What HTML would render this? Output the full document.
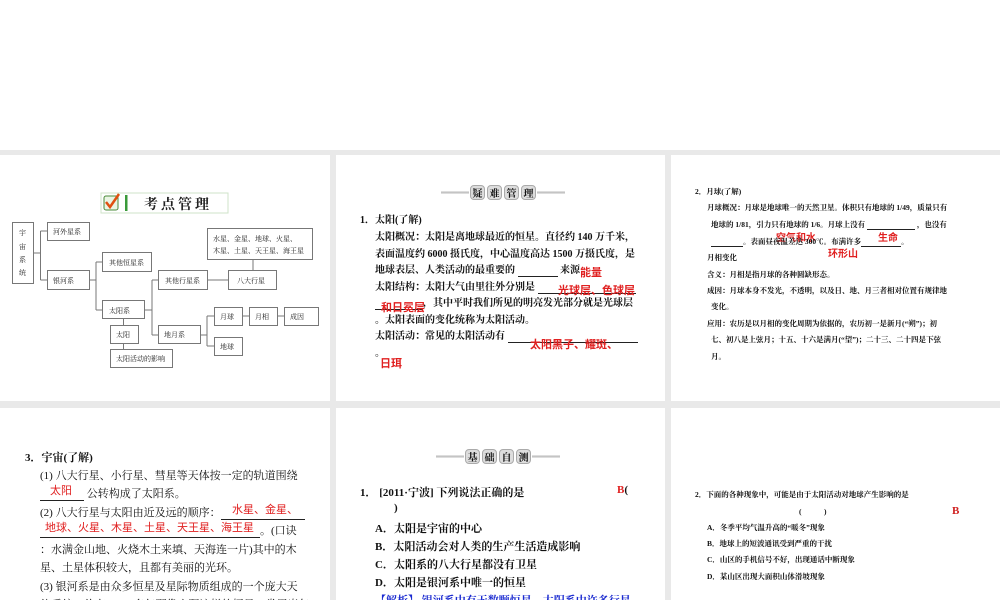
<!DOCTYPE html>
<html><head><meta charset="utf-8"><style>
*{margin:0;padding:0;box-sizing:border-box}
body{width:1000px;height:600px;overflow:hidden;background:#e9e9e9;position:relative;font-family:"Liberation Serif","Noto Serif CJK SC","Noto Sans CJK SC",serif;color:#111}
.s{position:absolute;background:#fff;overflow:hidden}
.t{position:absolute;white-space:nowrap}
.r{color:#e02020;font-family:"Liberation Sans","Noto Sans CJK SC",sans-serif}
.u{display:inline-block;border-bottom:1px solid #222}
.ttl{position:absolute;height:16px;display:flex;align-items:center}
.ttl .ln{height:3px;background:linear-gradient(#eee,#bbb,#eee);width:28px}
.ttl .c{width:15px;height:15px;border-radius:4px;background:#ddd;border:1px solid #aaa;font-size:10px;font-weight:bold;text-align:center;line-height:13px;margin:0 1px;font-family:"Noto Serif CJK SC",serif}
</style></head><body>
<div class="s" style="left:0;top:0;width:1000px;height:150px"></div>

<!-- slide 1 -->
<div class="s" style="left:0;top:155px;width:330px;height:246px">
<svg width="330" height="246" viewBox="0 155 330 246" style="position:absolute;left:0;top:0" font-family="Noto Serif CJK SC, serif" font-size="7" fill="#222">
<rect x="101" y="193" width="127" height="20" fill="#fff" stroke="#cfe3c8"/>
<rect x="104" y="196" width="14" height="14" fill="#eaf5e4" stroke="#4a8a3a" rx="2"/>
<path d="M106 202 L110 207 L119 194" stroke="#e05010" stroke-width="2.5" fill="none"/>
<rect x="125" y="195" width="2.5" height="16" fill="#3a9a3a"/>
<text x="178" y="209" font-size="14" font-weight="bold" text-anchor="middle" letter-spacing="3">考点管理</text>
<g fill="#fff" stroke="#777">
<rect x="12.5" y="222.5" width="21" height="61"/>
<rect x="47.5" y="222.5" width="42" height="18"/>
<rect x="47.5" y="270.5" width="42" height="19"/>
<rect x="102.5" y="252.5" width="49" height="19"/>
<rect x="102.5" y="300.5" width="42" height="18"/>
<rect x="110.5" y="325.5" width="28" height="18"/>
<rect x="110.5" y="349.5" width="62" height="18"/>
<rect x="158.5" y="270.5" width="49" height="19"/>
<rect x="228.5" y="270.5" width="48" height="19"/>
<rect x="207.5" y="228.5" width="105" height="31"/>
<rect x="158.5" y="325.5" width="42" height="18"/>
<rect x="214.5" y="307.5" width="28" height="18"/>
<rect x="249.5" y="307.5" width="28" height="18"/>
<rect x="284.5" y="307.5" width="34" height="18"/>
<rect x="214.5" y="337.5" width="28" height="18"/>
</g>
<g stroke="#777" fill="none">
<path d="M33.5 253 H40.5 M40.5 231 V280 M40.5 231 H47.5 M40.5 280 H47.5"/>
<path d="M89.5 280 H96 M96 262 V310 M96 262 H102.5 M96 310 H102.5"/>
<path d="M144.5 310 H152 M152 280 V335 M152 280 H158.5 M152 335 H158.5"/>
<path d="M123.5 318.5 V325.5 M123.5 343.5 V349.5"/>
<path d="M207.5 280 H228.5 M253 259.5 V270.5"/>
<path d="M200.5 335 H207 M207 316 V346 M207 316 H214.5 M207 346 H214.5"/>
<path d="M242.5 316 H249.5 M277.5 316 H284.5"/>
</g>
<text x="19" y="235">宇</text><text x="19" y="249">宙</text><text x="19" y="262">系</text><text x="19" y="275">统</text>
<text x="53" y="234">河外星系</text>
<text x="53" y="283">银河系</text>
<text x="109" y="265">其他恒星系</text>
<text x="109" y="313">太阳系</text>
<text x="116" y="337">太阳</text>
<text x="116" y="361">太阳活动的影响</text>
<text x="165" y="283">其他行星系</text>
<text x="237" y="283">八大行星</text>
<text x="213" y="241">水星、金星、地球、火星、</text>
<text x="213" y="253">木星、土星、天王星、海王星</text>
<text x="164" y="337">地月系</text>
<text x="220" y="319">月球</text><text x="255" y="319">月相</text><text x="290" y="319">成因</text>
<text x="220" y="349">地球</text>
</svg>
</div>

<!-- slide 2 -->
<div class="s" style="left:336px;top:155px;width:329px;height:246px;font-size:10px;font-weight:bold">
<div class="ttl" style="left:105px;top:29px"><div class="ln"></div><div class="c">疑</div><div class="c">难</div><div class="c">管</div><div class="c">理</div><div class="ln"></div></div>
<div class="t" style="left:24px;top:56px">1．太阳(了解)</div>
<div class="t" style="left:39px;top:73px">太阳概况：太阳是离地球最近的恒星。直径约 140 万千米，</div>
<div class="t" style="left:39px;top:90px">表面温度约 6000 摄氏度，中心温度高达 1500 万摄氏度，是</div>
<div class="t" style="left:39px;top:106px">地球表层、人类活动的最重要的 <span class="u" style="width:40px">&nbsp;</span> 来源</div>
<div class="t r" style="left:244px;top:109px;font-size:11px">能量</div>
<div class="t" style="left:39px;top:123px">太阳结构：太阳大气由里往外分别是 <span class="u" style="width:98px">&nbsp;</span></div>
<div class="t r" style="left:222px;top:127px;font-size:11px">光球层、色球层</div>
<div class="t" style="left:39px;top:139px"><span class="u" style="width:48px">&nbsp;</span>，其中平时我们所见的明亮发光部分就是光球层</div>
<div class="t r" style="left:45px;top:144px;font-size:11px">和日冕层</div>
<div class="t" style="left:39px;top:156px">。太阳表面的变化统称为太阳活动。</div>
<div class="t" style="left:39px;top:172px">太阳活动：常见的太阳活动有 <span class="u" style="width:130px">&nbsp;</span></div>
<div class="t r" style="left:194px;top:181px;font-size:11px">太阳黑子、耀斑、</div>
<div class="t" style="left:39px;top:189px">。</div>
<div class="t r" style="left:44px;top:200px;font-size:11px">日珥</div>
</div>

<!-- slide 3 -->
<div class="s" style="left:671px;top:155px;width:329px;height:246px;font-size:7.5px;font-weight:bold">
<div class="t" style="left:24px;top:31px">2．月球(了解)</div>
<div class="t" style="left:36px;top:47px">月球概况：月球是地球唯一的天然卫星。体积只有地球的 1/49，质量只有</div>
<div class="t" style="left:40px;top:64px">地球的 1/81，引力只有地球的 1/6。月球上没有 <span class="u" style="width:48px">&nbsp;</span> ，也没有</div>
<div class="t r" style="left:105px;top:74px;font-size:10px">空气和水</div>
<div class="t r" style="left:207px;top:74px;font-size:10px">生命</div>
<div class="t" style="left:40px;top:81px"><span class="u" style="width:32px">&nbsp;</span>。表面昼夜温差达 300℃。布满许多<span class="u" style="width:40px">&nbsp;</span>。</div>
<div class="t r" style="left:157px;top:90px;font-size:10px">环形山</div>
<div class="t" style="left:36px;top:97px">月相变化</div>
<div class="t" style="left:36px;top:114px">含义：月相是指月球的各种圆缺形态。</div>
<div class="t" style="left:36px;top:130px">成因：月球本身不发光，不透明，以及日、地、月三者相对位置有规律地</div>
<div class="t" style="left:40px;top:146px">变化。</div>
<div class="t" style="left:36px;top:163px">应用：农历是以月相的变化周期为依据的，农历初一是新月(“朔”)；初</div>
<div class="t" style="left:40px;top:179px">七、初八是上弦月；十五、十六是满月(“望”)；二十三、二十四是下弦</div>
<div class="t" style="left:40px;top:196px">月。</div>
</div>

<!-- slide 4 -->
<div class="s" style="left:0;top:408px;width:330px;height:192px;font-size:11px">
<div class="t" style="left:25px;top:41px;font-weight:bold">3．宇宙(了解)</div>
<div class="t" style="left:40px;top:59px">(1) 八大行星、小行星、彗星等天体按一定的轨道围绕</div>
<div class="t" style="left:40px;top:77px"><span class="u" style="width:44px">&nbsp;</span> 公转构成了太阳系。</div>
<div class="t r" style="left:50px;top:74px;font-size:11px">太阳</div>
<div class="t" style="left:40px;top:96px">(2) 八大行星与太阳由近及远的顺序：<span class="u" style="width:84px">&nbsp;</span></div>
<div class="t r" style="left:232px;top:93px;font-size:11px">水星、金星、</div>
<div class="t" style="left:40px;top:114px"><span class="u" style="width:220px">&nbsp;</span>。(口诀</div>
<div class="t r" style="left:45px;top:111px;font-size:11px">地球、火星、木星、土星、天王星、海王星</div>
<div class="t" style="left:40px;top:133px">：水满金山地、火烧木土来填、天海连一片)其中的木</div>
<div class="t" style="left:40px;top:151px">星、土星体积较大，且都有美丽的光环。</div>
<div class="t" style="left:40px;top:170px">(3) 银河系是由众多恒星及星际物质组成的一个庞大天</div>
<div class="t" style="left:40px;top:188px">体系统，约有 2000 多亿颗像太阳这样的恒星，常用光年</div>
</div>

<!-- slide 5 -->
<div class="s" style="left:336px;top:408px;width:329px;height:192px;font-size:11px;font-weight:bold">
<div class="ttl" style="left:100px;top:40px"><div class="ln"></div><div class="c">基</div><div class="c">础</div><div class="c">自</div><div class="c">测</div><div class="ln"></div></div>
<div class="t" style="left:24px;top:76px">1． [2011·宁波] 下列说法正确的是</div>
<div class="t" style="left:281px;top:76px"><span class="r" style="font-family:'Liberation Serif',serif">B</span>(</div>
<div class="t" style="left:58px;top:94px">)</div>
<div class="t" style="left:39px;top:112px">A．太阳是宇宙的中心</div>
<div class="t" style="left:39px;top:130px">B．太阳活动会对人类的生产生活造成影响</div>
<div class="t" style="left:39px;top:148px">C．太阳系的八大行星都没有卫星</div>
<div class="t" style="left:39px;top:166px">D．太阳是银河系中唯一的恒星</div>
<div class="t" style="left:39px;top:184px;color:#1a2ad0">【解析】 银河系中有无数颗恒星，太阳系中许多行星</div>
</div>

<!-- slide 6 -->
<div class="s" style="left:671px;top:408px;width:329px;height:192px;font-size:7.5px;font-weight:bold">
<div class="t" style="left:24px;top:81px">2．下面的各种现象中，可能是由于太阳活动对地球产生影响的是</div>
<div class="t" style="left:128px;top:98px">(　　　)</div>
<div class="t" style="left:281px;top:97px;color:#d02020;font-size:11px;font-family:'Liberation Serif',serif">B</div>
<div class="t" style="left:36px;top:114px">A．冬季平均气温升高的“暖冬”现象</div>
<div class="t" style="left:36px;top:130px">B．地球上的短波通讯受到严重的干扰</div>
<div class="t" style="left:36px;top:146px">C．山区的手机信号不好，出现通话中断现象</div>
<div class="t" style="left:36px;top:163px">D．某山区出现大面积山体滑坡现象</div>
</div>
</body></html>
